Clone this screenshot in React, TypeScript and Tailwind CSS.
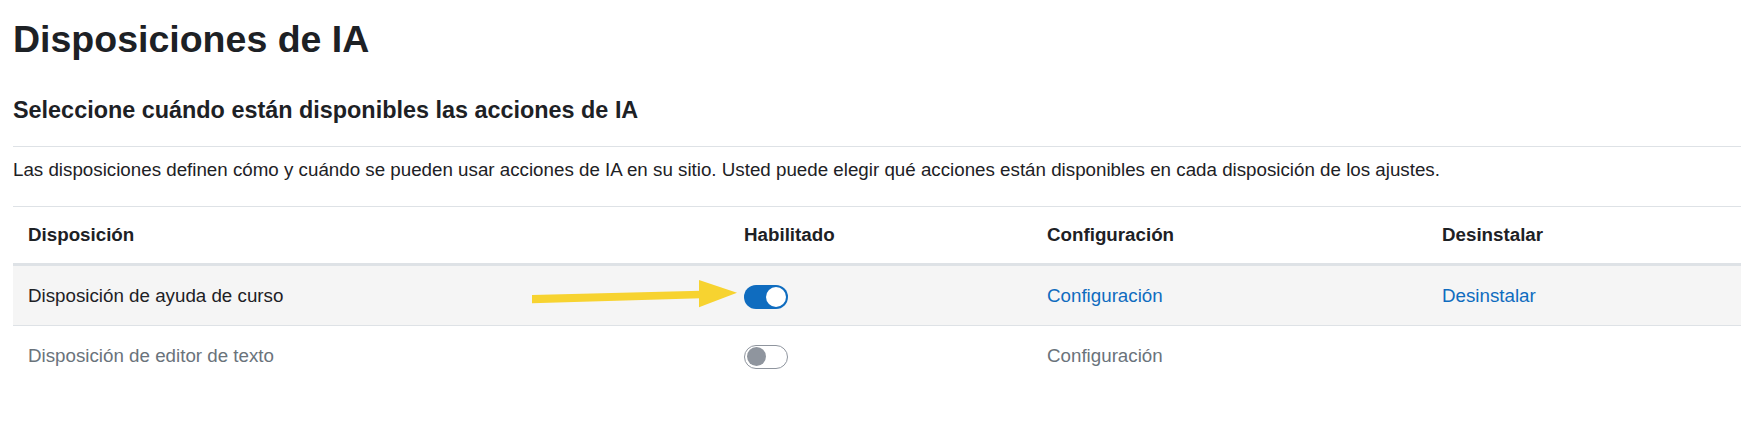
import React from "react";

type Placement = {
    name: string;
    enabled: boolean;
    canUninstall: boolean;
};

const placements: Placement[] = [
    { name: "Disposición de ayuda de curso", enabled: true, canUninstall: true },
    { name: "Disposición de editor de texto", enabled: false, canUninstall: false },
];

function Toggle({ on }: { on: boolean }) {
    if (on) {
        return (
            <span className="inline-flex items-center justify-end w-[44px] h-[24px] rounded-full bg-[#0f6cbf] px-[2px] align-middle">
                <span className="block w-[20px] h-[20px] rounded-full bg-white" />
            </span>
        );
    }
    return (
        <span className="inline-flex items-center justify-start w-[44px] h-[24px] rounded-full bg-white border border-[#8f959e] px-[2px] align-middle">
            <span className="block w-[19px] h-[19px] rounded-full bg-[#8f959e]" />
        </span>
    );
}

export default function App() {
    return (
        <div
            className="relative min-h-screen bg-white text-[#1d2125] pl-[13px] pt-[17px]"
            style={{ fontFamily: '"Liberation Sans", Arial, sans-serif' }}
        >
            <h1 className="text-[37.5px] leading-[45px] font-bold">Disposiciones de IA</h1>
            <h2 className="mt-[34px] text-[23.4px] leading-[28px] font-bold">
                Seleccione cuándo están disponibles las acciones de IA
            </h2>
            <div className="mt-[22px] border-t border-[#dee2e6]" />
            <p className="mt-[9px] text-[18.75px] leading-[28px]">
                Las disposiciones definen cómo y cuándo se pueden usar acciones de IA en su sitio. Usted puede elegir qué acciones están disponibles en cada disposición de los ajustes.
            </p>

            <table className="mt-[22px] w-full table-fixed border-collapse text-[18.75px] leading-[28px]">
                <colgroup>
                    <col className="w-[716px]" />
                    <col className="w-[303px]" />
                    <col className="w-[395px]" />
                    <col />
                </colgroup>
                <thead>
                    <tr className="border-t border-[#dee2e6] border-b-[3px] border-b-[#dee2e6]">
                        <th className="text-left font-bold px-[15px] py-[14px]">Disposición</th>
                        <th className="text-left font-bold px-[15px] py-[14px]">Habilitado</th>
                        <th className="text-left font-bold px-[15px] py-[14px]">Configuración</th>
                        <th className="text-left font-bold px-[15px] py-[14px]">Desinstalar</th>
                    </tr>
                </thead>
                <tbody>
                    {placements.map((p, i) => (
                        <tr
                            key={p.name}
                            className={i === 0 ? "bg-[#f5f5f5] border-b border-[#dee2e6]" : "text-[#6a737b]"}
                        >
                            <td className="px-[15px] py-[15.5px]">{p.name}</td>
                            <td className="px-[15px] py-[15.5px]">
                                <Toggle on={p.enabled} />
                            </td>
                            <td className="px-[15px] py-[15.5px]">
                                {p.enabled ? (
                                    <a href="#" className="text-[#0f6cbf]">Configuración</a>
                                ) : (
                                    <span>Configuración</span>
                                )}
                            </td>
                            <td className="px-[15px] py-[15.5px]">
                                {p.canUninstall && (
                                    <a href="#" className="text-[#0f6cbf]">Desinstalar</a>
                                )}
                            </td>
                        </tr>
                    ))}
                </tbody>
            </table>

            {/* annotation arrow pointing at the toggle */}
            <svg
                className="absolute left-[530px] top-[276px]"
                width="210"
                height="34"
                viewBox="0 0 210 34"
            >
                <polygon points="2,19 171,14.7 171,22.3 2,27.3" fill="#f7d330" />
                <polygon points="169,4 207,16.7 169,31.3" fill="#f7d330" />
            </svg>
        </div>
    );
}
